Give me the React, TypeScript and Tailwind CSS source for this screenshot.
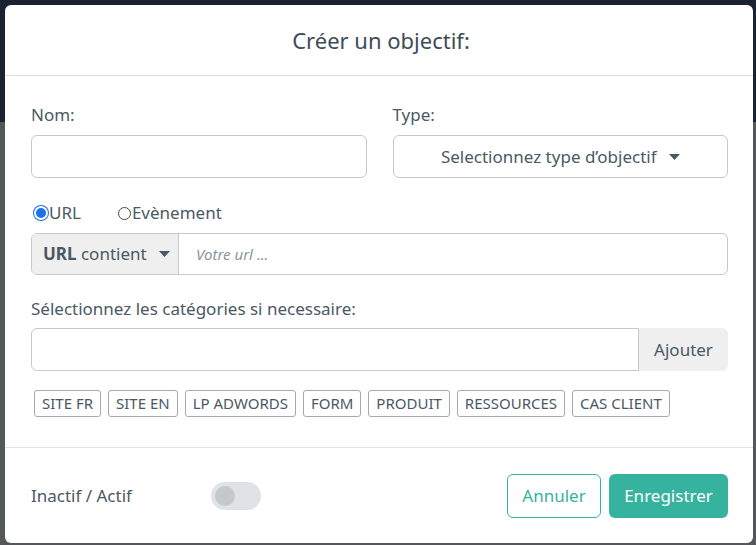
import React from "react";

const TAGS = ["SITE FR", "SITE EN", "LP ADWORDS", "FORM", "PRODUIT", "RESSOURCES", "CAS CLIENT"];

function Caret() {
  return (
    <svg width="11" height="6" viewBox="0 0 11 6" className="shrink-0">
      <path d="M0 0h11L5.5 6z" fill="#4a5963" />
    </svg>
  );
}

export default function App() {
  return (
    <div
      className="relative w-[756px] h-[545px] overflow-hidden bg-[#1b2230]"
      style={{ fontFamily: "'Noto Sans', Roboto, sans-serif" }}
    >
      {/* backdrop page content */}
      <div className="flex flex-col h-full">
        <div className="h-[122px] bg-[#1b2230]" />
        <div className="flex-1 bg-[#565759]" />
      </div>

      {/* Modal */}
      <div className="absolute left-[5px] top-[5px] w-[748px] h-[538px] bg-white rounded-[6px] flex flex-col text-[#4a5963]">
        {/* Header */}
        <div className="h-[71px] flex items-center justify-center border-b border-[#dedede]">
          <h2 className="text-[22px] text-[#3c4d58] mt-[1px] ml-[4px]">Créer un objectif:</h2>
        </div>

        {/* Body */}
        <div className="pl-[26px] pr-[25px] pt-[27px] pb-[30px] border-b border-[#e2e2e2]">
          <div className="grid grid-cols-2 gap-[26px]">
            <div>
              <label className="block text-[17px] leading-6">Nom:</label>
              <input className="mt-2 w-full h-[43px] rounded-[6px] border border-[#c8c8c8] px-3 outline-none" />
            </div>
            <div>
              <label className="block text-[17px] leading-6">Type:</label>
              <button className="mt-2 w-full h-[43px] rounded-[6px] border border-[#c8c8c8] flex items-center justify-center gap-[12px] text-[17px] text-[#4a5963]">
                <span>Selectionnez type d’objectif</span>
                <Caret />
              </button>
            </div>
          </div>

          {/* Radios */}
          <div className="mt-[23px] h-6 flex items-center text-[17px]">
            <span className="ml-[3px] w-[14px] h-[14px] rounded-full bg-[#1a73e8] border-[2px] border-white ring-1 ring-[#1a73e8]" />
            <span className="ml-[1px]">URL</span>
            <span className="ml-[37px] w-[13px] h-[13px] rounded-full border border-[#4a4a4a]" />
            <span className="ml-[1px]">Evènement</span>
          </div>

          {/* URL group */}
          <div className="mt-[8px] h-[42px] flex rounded-[6px] border border-[#c8c8c8] overflow-hidden">
            <div className="w-[147px] bg-[#efefef] border-r border-[#c8c8c8] flex items-center pl-[11px] gap-[12px] text-[17px]">
              <span>
                <b className="font-bold">URL</b> contient
              </span>
              <Caret />
            </div>
            <div className="flex-1 flex items-center pl-[17px] text-[15px] italic text-[#8a949b]">Votre url ...</div>
          </div>

          {/* categories */}
          <label className="block mt-[22px] text-[17px] leading-6">Sélectionnez les catégories si necessaire:</label>
          <div className="mt-[7px] h-[43px] flex">
            <input className="flex-1 h-full rounded-l-[6px] border border-[#c8c8c8] px-3 outline-none" />
            <div className="w-[89px] h-full rounded-r-[6px] bg-[#efefef] flex items-center justify-center text-[17px]">Ajouter</div>
          </div>

          <div className="mt-[19px] ml-[3px] flex gap-[7px]">
            {TAGS.map((t) => (
              <span
                key={t}
                className="h-[27px] px-[7px] flex items-center border border-[#a9a9a9] rounded-[3px] text-[15px] text-[#4a5963]"
              >
                {t}
              </span>
            ))}
          </div>
        </div>

        {/* Footer */}
        <div className="flex-1 flex items-center pl-[26px] pr-[25px]">
          <span className="text-[17px] w-[180px]">Inactif / Actif</span>
          <span className="w-[50px] h-[28px] rounded-full bg-[#dfe2e6] flex items-center pl-[4px]">
            <span className="w-[20px] h-[20px] rounded-full bg-[#c4c9cc]" />
          </span>
          <div className="ml-auto flex gap-[8px]">
            <button className="w-[94px] h-[44px] rounded-[6px] border border-[#36b39f] text-[#36b39f] text-[17px]">Annuler</button>
            <button className="w-[119px] h-[44px] rounded-[6px] bg-[#36b39f] text-white text-[17px]">Enregistrer</button>
          </div>
        </div>
      </div>
    </div>
  );
}
